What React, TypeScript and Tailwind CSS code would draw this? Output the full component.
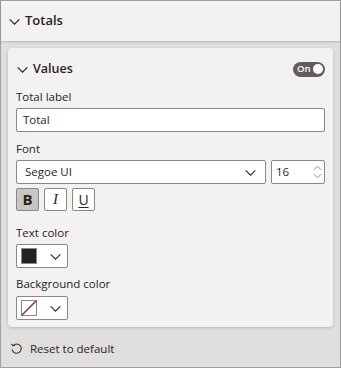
import React from 'react'

const Chevron = ({ className = '' }: { className?: string }) => (
  <svg viewBox="0 0 12 12" className={className} fill="none" stroke="currentColor" strokeWidth="1.1">
    <path d="M1.5 4 L6 8.5 L10.5 4" />
  </svg>
)

const ColorPicker = ({ children }: { children: React.ReactNode }) => (
  <div className="flex items-center w-[52px] h-[24px] bg-white border border-[#8a8886] rounded-[2px] pl-[4px] gap-[12px]">
    {children}
    <Chevron className="w-[13px] h-[13px] text-[#323130]" />
  </div>
)

const Label = ({ children, className = '' }: { children: React.ReactNode; className?: string }) => (
  <div className={`text-[11.5px] h-[18px] leading-[18px] ${className}`}>{children}</div>
)

const App = () => {
  return (
    <div
      className="w-[341px] h-[368px] bg-[#e1dfdd] border border-[#a19f9d] flex flex-col text-[#252423]"
      style={{ fontFamily: '"Segoe UI", "Open Sans", sans-serif' }}
    >
      <div className="h-[40px] shrink-0 bg-[#f3f2f1] flex items-center pl-[7px] gap-[4px] shadow-[0_1px_2px_rgba(0,0,0,0.18)]">
        <Chevron className="w-[13px] h-[13px]" />
        <span className="text-[13px] font-semibold">Totals</span>
      </div>
      <div className="flex-1 flex flex-col px-[7px] pt-[7px]">
        <div className="bg-[#f3f2f1] rounded-[4px] shadow-[0_1px_3px_rgba(0,0,0,0.2)] px-[8px] pt-[10px] h-[279px]">
          <div className="flex items-center justify-between h-[22px]">
            <div className="flex items-center gap-[4px]">
              <Chevron className="w-[13px] h-[13px]" />
              <span className="text-[12.5px] font-semibold">Values</span>
            </div>
            <div className="flex items-center w-[32px] h-[15px] bg-[#605e5c] rounded-full pl-[4px] pr-[2px] justify-between">
              <span className="text-[9.5px] font-semibold text-white leading-none">On</span>
              <span className="w-[10px] h-[10px] rounded-full bg-white" />
            </div>
          </div>
          <Label className="mt-[8px]">Total label</Label>
          <div className="mt-[2px] h-[24px] bg-white border border-[#8a8886] rounded-[2px] flex items-center px-[6px] text-[11.5px]">
            Total
          </div>
          <Label className="mt-[8px]">Font</Label>
          <div className="mt-[2px] flex gap-[5px]">
            <div className="flex-1 h-[24px] bg-white border border-[#8a8886] rounded-[2px] flex items-center justify-between pl-[8px] pr-[8px] text-[11.5px]">
              <span>Segoe UI</span>
              <Chevron className="w-[13px] h-[13px] text-[#323130]" />
            </div>
            <div className="w-[54px] h-[24px] bg-white border border-[#8a8886] rounded-[2px] flex items-center justify-between pl-[4px] pr-[2px] text-[11.5px]">
              <span>16</span>
              <div className="flex flex-col gap-[2px] text-[#8a8886]">
                <svg viewBox="0 0 10 6" className="w-[9px] h-[6px]" fill="none" stroke="currentColor" strokeWidth="1">
                  <path d="M1 5 L5 1 L9 5" />
                </svg>
                <svg viewBox="0 0 10 6" className="w-[9px] h-[6px]" fill="none" stroke="currentColor" strokeWidth="1">
                  <path d="M1 1 L5 5 L9 1" />
                </svg>
              </div>
            </div>
          </div>
          <div className="mt-[4px] flex gap-[5px]">
            <div className="w-[23px] h-[23px] bg-[#c8c6c4] border border-[#8a8886] rounded-[2px] flex items-center justify-center text-[15px] font-bold">B</div>
            <div className="w-[23px] h-[23px] bg-white border border-[#8a8886] rounded-[2px] flex items-center justify-center">
              <span className="text-[15px] italic" style={{ fontFamily: '"Liberation Serif", serif' }}>I</span>
            </div>
            <div className="w-[23px] h-[23px] bg-white border border-[#8a8886] rounded-[2px] flex items-center justify-center text-[14px] underline underline-offset-2">U</div>
          </div>
          <Label className="mt-[13px]">Text color</Label>
          <div className="mt-[2px]">
            <ColorPicker>
              <span className="w-[16px] h-[16px] bg-[#252423] border border-[#8a8886]" />
            </ColorPicker>
          </div>
          <Label className="mt-[7px]">Background color</Label>
          <div className="mt-[3px]">
            <ColorPicker>
              <svg viewBox="0 0 16 16" className="w-[16px] h-[16px]">
                <rect x="0.5" y="0.5" width="15" height="15" fill="white" stroke="#8a8886" />
                <path d="M1 15 L15 1" stroke="#a4262c" strokeWidth="1.5" />
              </svg>
            </ColorPicker>
          </div>
        </div>
        <div className="flex items-center gap-[7px] mt-[13px] pl-[2px] text-[11.5px]">
          <svg viewBox="0 0 14 14" className="w-[13px] h-[13px]" fill="none" stroke="#323130" strokeWidth="1.1">
            <path d="M3.2 4 A5 5 0 1 1 2.2 8" />
            <path d="M1.5 2 L3.2 4.2 L5.6 3.2" />
          </svg>
          <span>Reset to default</span>
        </div>
      </div>
    </div>
  )
}

export default App
